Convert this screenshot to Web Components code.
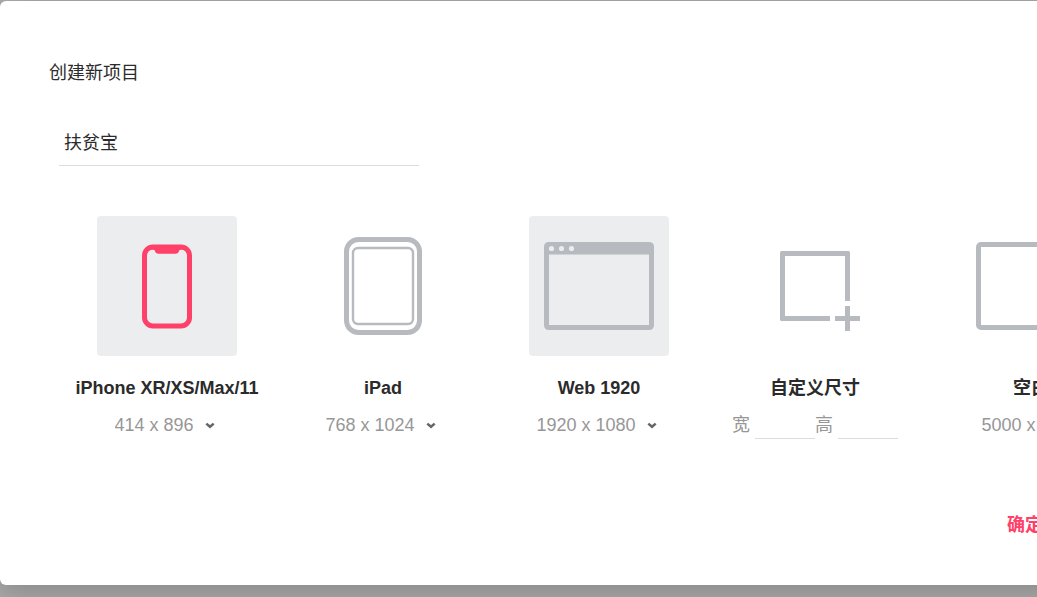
<!DOCTYPE html>
<html lang="zh-CN">
<head>
<meta charset="utf-8">
<title>创建新项目</title>
<style>
  body {
    margin: 0;
    min-height: 100vh;
    overflow: hidden;
    background: #a9a9a9;
    color: #2b2b2b;
    font: 18px/24px "Liberation Sans", "Noto Sans CJK SC", sans-serif;
  }
</style>
</head>
<body>
<project-dialog heading="创建新项目">
  <project-name slot="name" value="扶贫宝"></project-name>
  <size-card label="iPhone XR/XS/Max/11" icon="phone" active>
    <size-select value="414 x 896"></size-select>
  </size-card>
  <size-card label="iPad" icon="tablet">
    <size-select value="768 x 1024"></size-select>
  </size-card>
  <size-card label="Web 1920" icon="browser" active>
    <size-select value="1920 x 1080"></size-select>
  </size-card>
  <size-card label="自定义尺寸" icon="custom">
    <size-fields></size-fields>
  </size-card>
  <size-card label="空白" icon="blank">5000 x 5000</size-card>
</project-dialog>

<script>
const ICONS = {
  phone: `<g fill="none" stroke="#ff4069" stroke-width="5"><rect x="47.500" y="31" width="45" height="79" rx="8.500"/></g>
    <path fill="#ff4069" d="M54 29H86V33.500H84Q82.400 33.500 82 35Q81.400 37.700 78.500 37.700H61.500Q58.600 37.700 58 35Q57.600 33.500 56 33.500H54Z"/>`,
  tablet: `<rect x="33.500" y="23.500" width="73" height="93" rx="12" fill="none" stroke="#b7bbc0" stroke-width="5"/>
    <rect x="40" y="32" width="60" height="76" rx="5" fill="none" stroke="#b7bbc0" stroke-width="2.400"/>`,
  browser: `<path fill="#b7bbc0" fill-rule="evenodd" d="M20 26H120Q125 26 125 31V109Q125 114 120 114H20Q15 114 15 109V31Q15 26 20 26ZM20 38.500V109H120V38.500Z"/>
    <g fill="#ebedef"><circle cx="22.500" cy="32.500" r="2.600"/><circle cx="32.500" cy="32.500" r="2.600"/><circle cx="42.500" cy="32.500" r="2.600"/></g>`,
  custom: `<path fill="#b7bbc0" d="M36.500 35H103.500Q105 35 105 36.500V85H100V40H40V100H85V105H36.500Q35 105 35 103.500V36.500Q35 35 36.500 35ZM100 90H105V100H115V105H105V115H100V105H90V100H100Z"/>`,
  blank: `<rect x="17.500" y="28.500" width="105" height="83" rx="2.500" fill="none" stroke="#b7bbc0" stroke-width="5"/>`
};

class ProjectDialog extends HTMLElement {
  connectedCallback() {
    this.attachShadow({ mode: "open" }).innerHTML = `
      <style>
        :host { display: block; width: max-content; min-width: 100%; padding-top: 1px; }
        section { box-sizing: border-box; padding: 60px 59px 48px; background: #fff; border-radius: 6px;
                  box-shadow: 0 8px 24px rgba(0, 0, 0, .18); }
        h1 { margin: 0 0 36px -10px; font: inherit; }
        .sizes { display: grid; grid-template-columns: repeat(5, 216px); margin-top: 50px; }
        footer { display: flex; justify-content: flex-end; margin-top: 74px; padding-right: 96px; }
        button { padding: 0; border: 0; background: none; color: #ff4069; font: inherit; font-weight: bold; cursor: pointer; }
      </style>
      <section role="dialog" aria-labelledby="title">
        <h1 id="title">${this.getAttribute("heading")}</h1>
        <slot name="name"></slot>
        <div class="sizes"><slot></slot></div>
        <footer><button type="button">确定</button></footer>
      </section>`;
  }
}

class ProjectName extends HTMLElement {
  connectedCallback() {
    this.attachShadow({ mode: "open" }).innerHTML = `
      <style>
        :host { display: block; max-width: 360px; }
        input { display: block; box-sizing: border-box; width: 100%; height: 45px; padding: 0 5px 4px; border: 0;
                border-bottom: 1px solid #dcdcdc; outline: 0; background: none; color: inherit; font: inherit; }
      </style>
      <input type="text" aria-label="项目名称" value="${this.getAttribute("value")}">`;
  }
}

class SizeCard extends HTMLElement {
  connectedCallback() {
    const label = this.getAttribute("label");
    this.attachShadow({ mode: "open" }).innerHTML = `
      <style>
        :host { display: flex; flex-direction: column; align-items: center; }
        button { display: block; width: 140px; height: 140px; padding: 0; border: 0; border-radius: 4px; background: none; cursor: pointer; }
        :host([active]) button { background: #ebedef; }
        svg { display: block; width: 140px; height: 140px; }
        h2 { margin: 20px 0 11px; font: inherit; font-weight: bold; white-space: nowrap; }
        .size { display: flex; align-items: center; height: 28px; color: #979797; white-space: nowrap; }
      </style>
      <button type="button" aria-label="${label}"><svg viewBox="0 0 140 140" aria-hidden="true">${ICONS[this.getAttribute("icon")]}</svg></button>
      <h2>${label}</h2>
      <div class="size"><slot></slot></div>`;
  }
}

class SizeSelect extends HTMLElement {
  connectedCallback() {
    this.attachShadow({ mode: "open" }).innerHTML = `
      <style>
        :host { display: grid; align-items: center; }
        select, svg { grid-area: 1 / 1; }
        select { appearance: none; margin: 0; padding: 0 25px 0 0; border: 0; outline: 0; background: none; color: inherit; font: inherit; cursor: pointer; }
        svg { justify-self: end; width: 10px; height: 8px; margin-right: 5px; pointer-events: none; }
      </style>
      <select aria-label="尺寸"><option>${this.getAttribute("value")}</option></select>
      <svg viewBox="0 0 10 8" aria-hidden="true"><path d="M1.300 2.600L5 5.800L8.700 2.600" fill="none" stroke="#666" stroke-width="2.500"/></svg>`;
  }
}

class SizeFields extends HTMLElement {
  connectedCallback() {
    this.attachShadow({ mode: "open" }).innerHTML = `
      <style>
        :host { display: flex; }
        label { display: flex; align-items: center; gap: 5px; }
        input { box-sizing: border-box; width: 60px; height: 28px; padding: 0 4px; border: 0; border-bottom: 1px solid #dcdcdc;
                outline: 0; background: none; color: inherit; font: inherit; }
      </style>
      <label>宽<input type="text" inputmode="numeric"></label>
      <label>高<input type="text" inputmode="numeric"></label>`;
  }
}

customElements.define("project-dialog", ProjectDialog);
customElements.define("project-name", ProjectName);
customElements.define("size-card", SizeCard);
customElements.define("size-select", SizeSelect);
customElements.define("size-fields", SizeFields);
</script>
</body>
</html>
